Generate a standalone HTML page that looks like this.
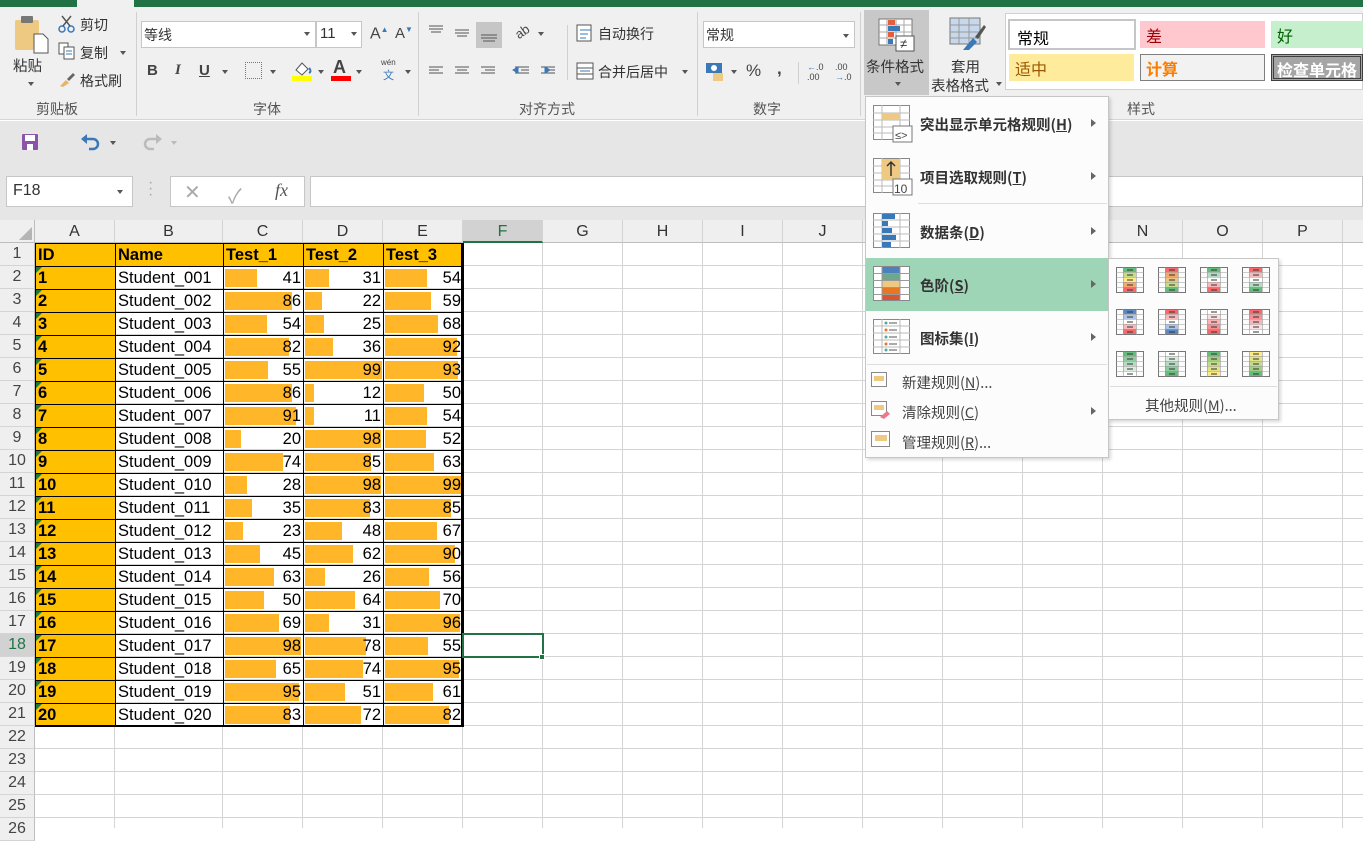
<!DOCTYPE html>
<html><head><meta charset="utf-8">
<style>
*{margin:0;padding:0;box-sizing:border-box}
body{width:1363px;height:828px;overflow:hidden;background:#fff;font-family:"Liberation Sans","Noto Sans CJK SC",sans-serif;position:relative;color:#262626}
.a{position:absolute}
.t{position:absolute;font-size:14px;color:#333;white-space:nowrap}
.cj{font-family:"Noto Sans CJK SC","Liberation Sans",sans-serif}
.glabel{position:absolute;top:99px;font-size:14px;color:#555}
.dd{position:absolute;width:0;height:0;border-left:3.5px solid transparent;border-right:3.5px solid transparent;border-top:4px solid #555}
.vs{position:absolute;width:1px;background:#d0d0d0}
table.d{position:absolute;left:35px;top:243px;border-collapse:collapse;table-layout:fixed;font-size:16.5px;color:#000}
table.d td{height:23px;border:1px solid #000;padding:0 2px;white-space:nowrap;overflow:hidden;position:relative;line-height:21px}
td.h{background:#ffc000;font-weight:bold}
td.n{text-align:right;padding-right:3px}
td.n i{position:absolute;left:1px;top:2px;bottom:2px;background:#ffb628}
td.n span{position:relative}
td.id{background:#ffc000;font-weight:bold}
td.id::before{content:"";position:absolute;left:0;top:0;border-top:6px solid #1e7a3c;border-right:6px solid transparent}
.rh{position:absolute;left:0;width:35px;height:23px;background:#efefef;border-bottom:1px solid #d4d4d4;border-right:1px solid #bdbdbd;text-align:center;font-size:16px;line-height:22px;color:#444}
.ch{position:absolute;top:220px;height:23px;background:#efefef;border-right:1px solid #d4d4d4;border-bottom:1px solid #bdbdbd;text-align:center;font-size:16px;line-height:23px;color:#333}
.mi{position:absolute;left:920px;font-size:14.5px;font-weight:bold;color:#333}
.ms{position:absolute;left:902px;font-size:14.5px;color:#444}
.arr{position:absolute;left:1091px;width:0;height:0;border-top:4px solid transparent;border-bottom:4px solid transparent;border-left:5px solid #666}
</style></head><body>
<!-- top green bar -->
<div class="a" style="left:0;top:0;width:1363px;height:7px;background:#217346"></div>
<div class="a" style="left:77px;top:0;width:57px;height:7px;background:#f0f0f0"></div>
<!-- ribbon -->
<div class="a" style="left:0;top:7px;width:1363px;height:113px;background:#f0f0f0;border-bottom:1px solid #d5d5d5"></div>
<!-- grey area below ribbon -->
<div class="a" style="left:0;top:121px;width:1363px;height:99px;background:#e6e6e6"></div>

<!-- clipboard group -->
<svg class="a" style="left:14px;top:14px" width="36" height="40"><rect x="1" y="6" width="24" height="30" rx="2" fill="#eec982"/><rect x="7" y="2" width="12" height="7" rx="1" fill="#777"/><path d="M20 20h9l5 5v14H20z" fill="#fff" stroke="#555"/></svg>
<div class="t cj" style="left:13px;top:55px;font-size:14.5px">粘贴</div>
<div class="dd" style="left:28px;top:82px"></div>
<svg class="a" style="left:58px;top:15px" width="18" height="18"><circle cx="4" cy="14" r="3" fill="none" stroke="#3a78b8" stroke-width="1.5"/><circle cx="13" cy="14" r="3" fill="none" stroke="#3a78b8" stroke-width="1.5"/><path d="M5 11L13 1M12 11L4 1" stroke="#555" stroke-width="1.5"/></svg>
<div class="t cj" style="left:80px;top:15px">剪切</div>
<svg class="a" style="left:58px;top:42px" width="18" height="18"><rect x="1" y="1" width="9" height="11" fill="#fff" stroke="#555"/><rect x="6" y="5" width="10" height="12" fill="#fff" stroke="#555"/><path d="M8 9h6M8 12h6" stroke="#3a78b8"/></svg>
<div class="t cj" style="left:80px;top:43px">复制</div>
<div class="dd" style="left:120px;top:51px"></div>
<svg class="a" style="left:58px;top:72px" width="18" height="16"><path d="M2 14l6-6 3 3-6 4z" fill="#e5b56a"/><path d="M9 7l6-6 2 2-6 6z" fill="#666"/></svg>
<div class="t cj" style="left:80px;top:71px">格式刷</div>
<div class="glabel cj" style="left:36px">剪贴板</div>
<div class="vs" style="left:136px;top:12px;height:104px"></div>

<!-- font group -->
<div class="a" style="left:141px;top:21px;width:175px;height:27px;background:#fff;border:1px solid #c6c6c6"></div>
<div class="t cj" style="left:144px;top:25px">等线</div>
<div class="dd" style="left:304px;top:32px"></div>
<div class="a" style="left:316px;top:21px;width:46px;height:27px;background:#fff;border:1px solid #c6c6c6"></div>
<div class="t" style="left:320px;top:25px;font-size:15px">11</div>
<div class="dd" style="left:351px;top:32px"></div>
<div class="t" style="left:370px;top:25px;font-size:16px;color:#444">A<sup style="font-size:8px;color:#3a78b8">▲</sup></div>
<div class="t" style="left:395px;top:25px;font-size:15px;color:#444">A<sup style="font-size:8px;color:#3a78b8">▼</sup></div>
<div class="t" style="left:147px;top:62px;font-weight:bold;font-size:15px;color:#444">B</div>
<div class="t" style="left:175px;top:62px;font-style:italic;font-weight:bold;font-size:15px;color:#444;font-family:'Liberation Serif',serif">I</div>
<div class="t" style="left:199px;top:62px;text-decoration:underline;font-weight:bold;font-size:15px;color:#444">U</div>
<div class="dd" style="left:222px;top:70px"></div>
<div class="a" style="left:245px;top:62px;width:17px;height:17px;border:1px dotted #777"></div>
<div class="dd" style="left:270px;top:70px"></div>
<svg class="a" style="left:291px;top:58px" width="22" height="24"><path d="M5 12l6-7 6 6-6 6z" fill="#fff" stroke="#555"/><path d="M18 10c2 2 2 4 0 5" stroke="#3a78b8" fill="none" stroke-width="2"/><rect x="1" y="18" width="20" height="5" fill="#ffff00"/></svg>
<div class="dd" style="left:318px;top:70px"></div>
<div class="t" style="left:333px;top:57px;font-size:18px;color:#444;font-weight:bold">A</div>
<div class="a" style="left:331px;top:76px;width:20px;height:5px;background:#f00"></div>
<div class="dd" style="left:356px;top:70px"></div>
<div class="t" style="left:381px;top:58px;font-size:8px;color:#444">wén</div>
<div class="t cj" style="left:383px;top:67px;font-size:11px;color:#3a78b8">文</div>
<div class="dd" style="left:405px;top:70px"></div>
<div class="glabel cj" style="left:253px">字体</div>
<div class="vs" style="left:418px;top:12px;height:104px"></div>

<!-- alignment -->
<svg class="a" style="left:427px;top:22px" width="140" height="60" stroke="#555" stroke-width="1">
<path d="M2 4h14M2 7h14M4 10h10"/><path d="M28 8h14M28 11h14M30 14h10"/>
<rect x="49" y="0" width="26" height="26" fill="#c6c6c6" stroke="none"/><path d="M54 13h16M54 16h16M56 19h12"/>
<path d="M2 45h14M2 48h10M2 51h14"/><path d="M28 45h14M30 48h10M28 51h14"/><path d="M54 45h14M58 48h10M54 51h14"/>
<path d="M88 45h14M94 48h8M88 51h14" /><path d="M114 45h14M120 48h8M114 51h14"/>
<path d="M86 48l5-3v6zM118 45l5 3-5 3z" fill="#3a78b8" stroke="#3a78b8"/>
</svg>
<div class="t" style="left:515px;top:24px;font-size:13px;color:#444;transform:rotate(-35deg)">ab</div>
<div class="dd" style="left:538px;top:32px"></div>
<div class="vs" style="left:567px;top:25px;height:55px"></div>
<svg class="a" style="left:576px;top:24px" width="18" height="18"><rect x="1" y="1" width="14" height="16" fill="#fff" stroke="#555"/><path d="M4 6h11M4 10h8M4 14h6" stroke="#3a78b8"/></svg>
<div class="t cj" style="left:598px;top:24px">自动换行</div>
<svg class="a" style="left:576px;top:62px" width="18" height="18"><rect x="1" y="1" width="16" height="16" fill="#fff" stroke="#555"/><path d="M1 6h16M1 12h16" stroke="#555"/><path d="M4 9h10" stroke="#3a78b8"/></svg>
<div class="t cj" style="left:598px;top:62px">合并后居中</div>
<div class="dd" style="left:682px;top:70px"></div>
<div class="glabel cj" style="left:519px">对齐方式</div>
<div class="vs" style="left:697px;top:12px;height:104px"></div>

<!-- number -->
<div class="a" style="left:703px;top:21px;width:152px;height:27px;background:#fff;border:1px solid #c6c6c6"></div>
<div class="t cj" style="left:706px;top:25px">常规</div>
<div class="dd" style="left:843px;top:34px"></div>
<svg class="a" style="left:705px;top:62px" width="22" height="20"><rect x="1" y="1" width="16" height="10" fill="#3a78b8"/><circle cx="9" cy="6" r="3" fill="#fff"/><rect x="8" y="11" width="10" height="8" fill="#eec982"/></svg>
<div class="dd" style="left:731px;top:70px"></div>
<div class="t" style="left:746px;top:61px;font-size:17px;color:#444">%</div>
<div class="t" style="left:777px;top:59px;font-size:17px;color:#444;font-weight:bold">,</div>
<div class="vs" style="left:798px;top:62px;height:22px"></div>
<div class="t" style="left:807px;top:62px;font-size:9px;line-height:10px;color:#444"><span style="color:#3a78b8">←</span>.0<br>.00</div>
<div class="t" style="left:835px;top:62px;font-size:9px;line-height:10px;color:#444">.00<br><span style="color:#3a78b8">→</span>.0</div>
<div class="glabel cj" style="left:753px">数字</div>
<div class="vs" style="left:860px;top:12px;height:104px"></div>

<!-- styles -->
<div class="a" style="left:864px;top:10px;width:65px;height:85px;background:#c8c8c8"></div>
<svg class="a" style="left:878px;top:18px" width="38" height="34"><g stroke="#777" fill="#fff"><rect x="1" y="1" width="33" height="26"/></g><path d="M1 7h33M1 14h33M1 20h33M9 1v26M18 1v26M26 1v26" stroke="#aaa"/><rect x="10" y="2" width="7" height="5" fill="#e06040"/><rect x="10" y="8" width="12" height="5" fill="#3a78b8"/><rect x="10" y="14" width="6" height="5" fill="#e06040"/><rect x="10" y="21" width="5" height="5" fill="#3a78b8"/><rect x="18" y="18" width="18" height="15" fill="#fff" stroke="#555"/><text x="22" y="30" font-size="13" fill="#333">≠</text></svg>
<div class="t cj" style="left:866px;top:56px;font-size:14.5px">条件格式</div>
<div class="dd" style="left:895px;top:82px"></div>
<svg class="a" style="left:949px;top:17px" width="38" height="36"><rect x="1" y="1" width="30" height="26" fill="#c8d8ec" stroke="#777"/><path d="M1 8h30M1 15h30M1 21h30M10 1v26M20 1v26" stroke="#999"/><path d="M14 33l10-12 4 4-8 8z" fill="#3a78b8"/><path d="M26 20l9-12 2 2-8 12z" fill="#555"/></svg>
<div class="t cj" style="left:951px;top:56px;font-size:14.5px">套用</div>
<div class="t cj" style="left:931px;top:75px;font-size:14.5px">表格格式</div>
<div class="dd" style="left:996px;top:82px"></div>
<div class="a" style="left:1005px;top:13px;width:358px;height:77px;background:#fff;border:1px solid #d0d0d0"></div>
<div class="a cj" style="left:1008px;top:19px;width:128px;height:31px;border:2px solid #c6c6c6;background:#fff;font-size:16px;padding:4px 7px;color:#000">常规</div>
<div class="a cj" style="left:1140px;top:21px;width:125px;height:27px;background:#ffc7ce;font-size:16px;padding:2px 6px;color:#9c0006">差</div>
<div class="a cj" style="left:1271px;top:21px;width:92px;height:27px;background:#c6efce;font-size:16px;padding:2px 6px;color:#006100">好</div>
<div class="a cj" style="left:1009px;top:54px;width:125px;height:27px;background:#ffeb9c;font-size:16px;padding:2px 6px;color:#9c5700">适中</div>
<div class="a cj" style="left:1140px;top:54px;width:125px;height:27px;background:#f2f2f2;border:1px solid #7f7f7f;font-size:16px;padding:1px 5px;color:#fa7d00;font-weight:bold">计算</div>
<div class="a cj" style="left:1271px;top:54px;width:92px;height:27px;background:#a5a5a5;border:3px double #3f3f3f;font-size:16px;padding:0 3px;color:#fff;font-weight:bold;overflow:hidden;white-space:nowrap">检查单元格</div>
<div class="glabel cj" style="left:1127px">样式</div>

<!-- QAT -->
<svg class="a" style="left:22px;top:134px" width="16" height="16"><rect x="0" y="0" width="16" height="16" rx="1" fill="#8a55a8"/><rect x="3" y="1" width="10" height="6" fill="#fff"/><rect x="5" y="10" width="6" height="6" fill="#fff"/></svg>
<svg class="a" style="left:80px;top:133px" width="22" height="18"><path d="M5 6h8a5 5 0 010 10h-4" stroke="#3a78b8" stroke-width="2.5" fill="none"/><path d="M1 6l6-5v10z" fill="#3a78b8"/></svg>
<div class="dd" style="left:110px;top:141px"></div>
<svg class="a" style="left:141px;top:133px" width="22" height="18"><path d="M17 6H9a5 5 0 000 10h4" stroke="#bbb" stroke-width="2.5" fill="none"/><path d="M21 6l-6-5v10z" fill="#bbb"/></svg>
<div class="dd" style="left:171px;top:141px;border-top-color:#bbb"></div>

<!-- formula bar -->
<div class="a" style="left:6px;top:176px;width:127px;height:31px;background:#fff;border:1px solid #c6c6c6"></div>
<div class="t" style="left:13px;top:182px;font-size:16px;color:#333">F18</div>
<div class="dd" style="left:117px;top:190px"></div>
<div class="t" style="left:148px;top:180px;color:#aaa;font-size:16px;line-height:6px">·<br>·<br>·</div>
<div class="a" style="left:170px;top:176px;width:135px;height:31px;background:#fff;border:1px solid #c6c6c6"></div>
<div class="t" style="left:184px;top:180px;font-size:20px;color:#aaa">✕</div>
<div class="t" style="left:228px;top:180px;font-size:20px;color:#aaa">✓</div>
<div class="t" style="left:275px;top:180px;font-size:18px;color:#555;font-style:italic;font-family:'Liberation Serif',serif">fx</div>
<div class="a" style="left:310px;top:176px;width:1053px;height:31px;background:#fff;border:1px solid #c6c6c6"></div>

<!-- grid lines -->
<div class="a" style="left:35px;top:243px;width:1328px;height:585px;background:repeating-linear-gradient(to bottom,transparent 0 22px,#d4d4d4 22px 23px)"></div>
<div class="vs" style="left:542px;top:243px;height:585px;background:#d4d4d4"></div>
<div class="vs" style="left:622px;top:243px;height:585px;background:#d4d4d4"></div>
<div class="vs" style="left:702px;top:243px;height:585px;background:#d4d4d4"></div>
<div class="vs" style="left:782px;top:243px;height:585px;background:#d4d4d4"></div>
<div class="vs" style="left:862px;top:243px;height:585px;background:#d4d4d4"></div>
<div class="vs" style="left:942px;top:243px;height:585px;background:#d4d4d4"></div>
<div class="vs" style="left:1022px;top:243px;height:585px;background:#d4d4d4"></div>
<div class="vs" style="left:1102px;top:243px;height:585px;background:#d4d4d4"></div>
<div class="vs" style="left:1182px;top:243px;height:585px;background:#d4d4d4"></div>
<div class="vs" style="left:1262px;top:243px;height:585px;background:#d4d4d4"></div>
<div class="vs" style="left:1342px;top:243px;height:585px;background:#d4d4d4"></div>
<div class="vs" style="left:114px;top:726px;height:102px;background:#d4d4d4"></div>
<div class="vs" style="left:222px;top:726px;height:102px;background:#d4d4d4"></div>
<div class="vs" style="left:302px;top:726px;height:102px;background:#d4d4d4"></div>
<div class="vs" style="left:382px;top:726px;height:102px;background:#d4d4d4"></div>
<div class="vs" style="left:462px;top:726px;height:102px;background:#d4d4d4"></div>

<!-- column headers -->
<div class="a" style="left:0;top:220px;width:35px;height:23px;background:#efefef;border-right:1px solid #bdbdbd;border-bottom:1px solid #bdbdbd"></div>
<div class="a" style="left:19px;top:227px;width:0;height:0;border-left:13px solid transparent;border-bottom:13px solid #b5b5b5"></div>
<div class="ch" style="left:35px;width:80px">A</div>
<div class="ch" style="left:115px;width:108px">B</div>
<div class="ch" style="left:223px;width:80px">C</div>
<div class="ch" style="left:303px;width:80px">D</div>
<div class="ch" style="left:383px;width:80px">E</div>
<div class="ch" style="left:463px;width:80px;background:#d2d2d2;color:#217346;border-bottom:2px solid #217346">F</div>
<div class="ch" style="left:543px;width:80px">G</div>
<div class="ch" style="left:623px;width:80px">H</div>
<div class="ch" style="left:703px;width:80px">I</div>
<div class="ch" style="left:783px;width:80px">J</div>
<div class="ch" style="left:863px;width:80px">K</div>
<div class="ch" style="left:943px;width:80px">L</div>
<div class="ch" style="left:1023px;width:80px">M</div>
<div class="ch" style="left:1103px;width:80px">N</div>
<div class="ch" style="left:1183px;width:80px">O</div>
<div class="ch" style="left:1263px;width:80px">P</div>
<div class="ch" style="left:1343px;width:30px"></div>

<!-- row headers -->
<div class="rh" style="top:243px">1</div><div class="rh" style="top:266px">2</div><div class="rh" style="top:289px">3</div><div class="rh" style="top:312px">4</div><div class="rh" style="top:335px">5</div><div class="rh" style="top:358px">6</div><div class="rh" style="top:381px">7</div><div class="rh" style="top:404px">8</div><div class="rh" style="top:427px">9</div><div class="rh" style="top:450px">10</div><div class="rh" style="top:473px">11</div><div class="rh" style="top:496px">12</div><div class="rh" style="top:519px">13</div><div class="rh" style="top:542px">14</div><div class="rh" style="top:565px">15</div><div class="rh" style="top:588px">16</div><div class="rh" style="top:611px">17</div><div class="rh" style="top:634px;background:#d2d2d2;color:#217346">18</div><div class="rh" style="top:657px">19</div><div class="rh" style="top:680px">20</div><div class="rh" style="top:703px">21</div><div class="rh" style="top:726px">22</div><div class="rh" style="top:749px">23</div><div class="rh" style="top:772px">24</div><div class="rh" style="top:795px">25</div><div class="rh" style="top:818px">26</div>

<!-- data -->
<table class="d">
<colgroup><col style="width:80px"><col style="width:108px"><col style="width:80px"><col style="width:80px"><col style="width:80px"></colgroup>
<tr><td class="h">ID</td><td class="h">Name</td><td class="h">Test_1</td><td class="h">Test_2</td><td class="h">Test_3</td></tr>
<tr><td class="id">1</td><td>Student_001</td><td class="n"><i style="width:32px"></i><span>41</span></td><td class="n"><i style="width:24px"></i><span>31</span></td><td class="n"><i style="width:42px"></i><span>54</span></td></tr>
<tr><td class="id">2</td><td>Student_002</td><td class="n"><i style="width:67px"></i><span>86</span></td><td class="n"><i style="width:17px"></i><span>22</span></td><td class="n"><i style="width:46px"></i><span>59</span></td></tr>
<tr><td class="id">3</td><td>Student_003</td><td class="n"><i style="width:42px"></i><span>54</span></td><td class="n"><i style="width:19px"></i><span>25</span></td><td class="n"><i style="width:53px"></i><span>68</span></td></tr>
<tr><td class="id">4</td><td>Student_004</td><td class="n"><i style="width:64px"></i><span>82</span></td><td class="n"><i style="width:28px"></i><span>36</span></td><td class="n"><i style="width:72px"></i><span>92</span></td></tr>
<tr><td class="id">5</td><td>Student_005</td><td class="n"><i style="width:43px"></i><span>55</span></td><td class="n"><i style="width:77px"></i><span>99</span></td><td class="n"><i style="width:73px"></i><span>93</span></td></tr>
<tr><td class="id">6</td><td>Student_006</td><td class="n"><i style="width:67px"></i><span>86</span></td><td class="n"><i style="width:9px"></i><span>12</span></td><td class="n"><i style="width:39px"></i><span>50</span></td></tr>
<tr><td class="id">7</td><td>Student_007</td><td class="n"><i style="width:71px"></i><span>91</span></td><td class="n"><i style="width:9px"></i><span>11</span></td><td class="n"><i style="width:42px"></i><span>54</span></td></tr>
<tr><td class="id">8</td><td>Student_008</td><td class="n"><i style="width:16px"></i><span>20</span></td><td class="n"><i style="width:76px"></i><span>98</span></td><td class="n"><i style="width:41px"></i><span>52</span></td></tr>
<tr><td class="id">9</td><td>Student_009</td><td class="n"><i style="width:58px"></i><span>74</span></td><td class="n"><i style="width:66px"></i><span>85</span></td><td class="n"><i style="width:49px"></i><span>63</span></td></tr>
<tr><td class="id">10</td><td>Student_010</td><td class="n"><i style="width:22px"></i><span>28</span></td><td class="n"><i style="width:76px"></i><span>98</span></td><td class="n"><i style="width:77px"></i><span>99</span></td></tr>
<tr><td class="id">11</td><td>Student_011</td><td class="n"><i style="width:27px"></i><span>35</span></td><td class="n"><i style="width:65px"></i><span>83</span></td><td class="n"><i style="width:66px"></i><span>85</span></td></tr>
<tr><td class="id">12</td><td>Student_012</td><td class="n"><i style="width:18px"></i><span>23</span></td><td class="n"><i style="width:37px"></i><span>48</span></td><td class="n"><i style="width:52px"></i><span>67</span></td></tr>
<tr><td class="id">13</td><td>Student_013</td><td class="n"><i style="width:35px"></i><span>45</span></td><td class="n"><i style="width:48px"></i><span>62</span></td><td class="n"><i style="width:70px"></i><span>90</span></td></tr>
<tr><td class="id">14</td><td>Student_014</td><td class="n"><i style="width:49px"></i><span>63</span></td><td class="n"><i style="width:20px"></i><span>26</span></td><td class="n"><i style="width:44px"></i><span>56</span></td></tr>
<tr><td class="id">15</td><td>Student_015</td><td class="n"><i style="width:39px"></i><span>50</span></td><td class="n"><i style="width:50px"></i><span>64</span></td><td class="n"><i style="width:55px"></i><span>70</span></td></tr>
<tr><td class="id">16</td><td>Student_016</td><td class="n"><i style="width:54px"></i><span>69</span></td><td class="n"><i style="width:24px"></i><span>31</span></td><td class="n"><i style="width:75px"></i><span>96</span></td></tr>
<tr><td class="id">17</td><td>Student_017</td><td class="n"><i style="width:76px"></i><span>98</span></td><td class="n"><i style="width:61px"></i><span>78</span></td><td class="n"><i style="width:43px"></i><span>55</span></td></tr>
<tr><td class="id">18</td><td>Student_018</td><td class="n"><i style="width:51px"></i><span>65</span></td><td class="n"><i style="width:58px"></i><span>74</span></td><td class="n"><i style="width:74px"></i><span>95</span></td></tr>
<tr><td class="id">19</td><td>Student_019</td><td class="n"><i style="width:74px"></i><span>95</span></td><td class="n"><i style="width:40px"></i><span>51</span></td><td class="n"><i style="width:48px"></i><span>61</span></td></tr>
<tr><td class="id">20</td><td>Student_020</td><td class="n"><i style="width:65px"></i><span>83</span></td><td class="n"><i style="width:56px"></i><span>72</span></td><td class="n"><i style="width:64px"></i><span>82</span></td></tr>
</table>
<div class="a" style="left:461px;top:243px;width:2px;height:484px;background:#000"></div>
<div class="a" style="left:35px;top:725px;width:428px;height:2px;background:#000"></div>
<!-- selection -->
<div class="a" style="left:462px;top:633px;width:82px;height:25px;border:2px solid #217346"></div>
<div class="a" style="left:539px;top:654px;width:6px;height:6px;background:#217346;border:1px solid #fff"></div>

<!-- dropdown menu -->
<div class="a" style="left:865px;top:96px;width:244px;height:362px;background:#fcfcfc;border:1px solid #c6c6c6;box-shadow:2px 2px 3px rgba(0,0,0,.15)"></div>
<svg class="a" style="left:873px;top:105px" width="40" height="38"><rect x="0.5" y="0.5" width="36" height="34" fill="#fff" stroke="#888"/><path d="M0 8h37M0 15h37M0 22h37M0 28h37M9 0v35M27 0v35" stroke="#bbb"/><rect x="9" y="8" width="18" height="7" fill="#eec982"/><rect x="20" y="21" width="19" height="16" fill="#fff" stroke="#777"/><text x="22" y="34" font-size="11" fill="#444">≤&gt;</text></svg>
<div class="mi cj" style="top:114px">突出显示单元格规则(<u>H</u>)</div><div class="arr" style="top:119px"></div>
<svg class="a" style="left:873px;top:158px" width="40" height="38"><rect x="0.5" y="0.5" width="36" height="34" fill="#fff" stroke="#888"/><path d="M0 8h37M0 15h37M0 22h37M0 28h37M9 0v35M27 0v35" stroke="#bbb"/><rect x="9" y="1" width="18" height="21" fill="#eec982"/><path d="M18 4v14M14 8l4-4 4 4" stroke="#333" stroke-width="1.5" fill="none"/><rect x="20" y="21" width="19" height="16" fill="#fff" stroke="#777"/><text x="21" y="35" font-size="12" fill="#444">10</text></svg>
<div class="mi cj" style="top:167px">项目选取规则(<u>T</u>)</div><div class="arr" style="top:172px"></div>
<div class="a" style="left:918px;top:203px;width:189px;height:1px;background:#ddd"></div>
<svg class="a" style="left:873px;top:213px" width="40" height="38"><rect x="0.5" y="0.5" width="36" height="34" fill="#fff" stroke="#888"/><path d="M0 7h37M0 14h37M0 21h37M0 28h37M9 0v35M27 0v35" stroke="#bbb"/><g fill="#3a78b8"><rect x="9" y="1" width="13" height="5"/><rect x="9" y="8" width="6" height="5"/><rect x="9" y="15" width="10" height="5"/><rect x="9" y="22" width="14" height="5"/><rect x="9" y="29" width="9" height="5"/></g></svg>
<div class="mi cj" style="top:222px">数据条(<u>D</u>)</div><div class="arr" style="top:227px"></div>
<div class="a" style="left:866px;top:258px;width:242px;height:53px;background:#9fd5b7"></div>
<svg class="a" style="left:873px;top:266px" width="40" height="38"><rect x="0.5" y="0.5" width="36" height="34" fill="#fff" stroke="#888"/><g><rect x="9" y="1" width="18" height="6" fill="#4e7fbf"/><rect x="9" y="8" width="18" height="6" fill="#6da88a"/><rect x="9" y="15" width="18" height="6" fill="#eec982"/><rect x="9" y="22" width="18" height="6" fill="#e87722"/><rect x="9" y="29" width="18" height="5" fill="#d65532"/></g><path d="M0 7.5h37M0 14.5h37M0 21.5h37M0 28.5h37M9 0v35M27 0v35" stroke="#999"/></svg>
<div class="mi cj" style="top:275px">色阶(<u>S</u>)</div><div class="arr" style="top:280px"></div>
<svg class="a" style="left:873px;top:319px" width="40" height="38"><rect x="0.5" y="0.5" width="36" height="34" fill="#fff" stroke="#888"/><path d="M0 7h37M0 14h37M0 21h37M0 28h37M9 0v35M27 0v35" stroke="#bbb"/><g><circle cx="13" cy="4" r="1.5" fill="#5a9"/><circle cx="13" cy="11" r="1.5" fill="#e87722"/><circle cx="13" cy="18" r="1.5" fill="#5a9"/><circle cx="13" cy="25" r="1.5" fill="#e87722"/><circle cx="13" cy="31" r="1.5" fill="#5a9"/></g><path d="M16 4h8M16 11h8M16 18h8M16 25h8M16 31h8" stroke="#555"/></svg>
<div class="mi cj" style="top:328px">图标集(<u>I</u>)</div><div class="arr" style="top:333px"></div>
<div class="a" style="left:867px;top:364px;width:240px;height:1px;background:#ddd"></div>
<svg class="a" style="left:871px;top:372px" width="18" height="16"><rect x="0.5" y="0.5" width="15" height="14" fill="#fff" stroke="#888"/><rect x="3" y="4" width="10" height="5" fill="#eec982"/></svg>
<div class="ms cj" style="top:372px">新建规则(<u>N</u>)...</div>
<svg class="a" style="left:871px;top:401px" width="20" height="18"><rect x="0.5" y="0.5" width="15" height="14" fill="#fff" stroke="#888"/><rect x="3" y="4" width="10" height="5" fill="#eec982"/><path d="M9 16l7-6 3 3-6 5z" fill="#e87a8a"/></svg>
<div class="ms cj" style="top:402px">清除规则(<u>C</u>)</div><div class="arr" style="top:407px"></div>
<svg class="a" style="left:871px;top:431px" width="20" height="18"><rect x="0.5" y="0.5" width="18" height="15" fill="#fff" stroke="#888"/><rect x="4" y="4" width="12" height="6" fill="#eec982"/></svg>
<div class="ms cj" style="top:432px">管理规则(<u>R</u>)...</div>

<!-- submenu -->
<div class="a" style="left:1108px;top:258px;width:171px;height:162px;background:#fcfcfc;border:1px solid #c6c6c6;box-shadow:2px 2px 3px rgba(0,0,0,.15)"></div>
<svg class="a" style="left:1116px;top:267px" width="160" height="115">
<defs><g id="fr"><rect x="0.5" y="0.5" width="27" height="25" fill="none" stroke="#777"/><path d="M0 5.5h28M0 10.5h28M0 15.5h28M0 20.5h28M7.5 0v26M20.5 0v26" stroke="#999" stroke-width=".6"/><path d="M11 3h6M11 8h6M11 13h6M11 18h6M11 23h6" stroke="#333"/></g></defs>
<g transform="translate(0,0)"><rect x="7" y="0" width="13" height="5" fill="#63be7b"/><rect x="7" y="5" width="13" height="5" fill="#c5dc8a"/><rect x="7" y="10" width="13" height="5" fill="#ffeb84"/><rect x="7" y="15" width="13" height="5" fill="#f8a66e"/><rect x="7" y="20" width="13" height="6" fill="#f8696b"/><use href="#fr"/></g>
<g transform="translate(42,0)"><rect x="7" y="0" width="13" height="5" fill="#f8696b"/><rect x="7" y="5" width="13" height="5" fill="#f8a66e"/><rect x="7" y="10" width="13" height="5" fill="#e8c77c"/><rect x="7" y="15" width="13" height="5" fill="#c5dc8a"/><rect x="7" y="20" width="13" height="6" fill="#63be7b"/><use href="#fr"/></g>
<g transform="translate(84,0)"><rect x="7" y="0" width="13" height="5" fill="#63be7b"/><rect x="7" y="5" width="13" height="5" fill="#b1ddc0"/><rect x="7" y="10" width="13" height="5" fill="#fff"/><rect x="7" y="15" width="13" height="5" fill="#f9b9bb"/><rect x="7" y="20" width="13" height="6" fill="#f8696b"/><use href="#fr"/></g>
<g transform="translate(126,0)"><rect x="7" y="0" width="13" height="5" fill="#f8696b"/><rect x="7" y="5" width="13" height="5" fill="#f9b9bb"/><rect x="7" y="10" width="13" height="5" fill="#fff"/><rect x="7" y="15" width="13" height="5" fill="#b1ddc0"/><rect x="7" y="20" width="13" height="6" fill="#63be7b"/><use href="#fr"/></g>
<g transform="translate(0,42)"><rect x="7" y="0" width="13" height="5" fill="#5a8ac6"/><rect x="7" y="5" width="13" height="5" fill="#aec5e7"/><rect x="7" y="10" width="13" height="5" fill="#fff"/><rect x="7" y="15" width="13" height="5" fill="#f9b9bb"/><rect x="7" y="20" width="13" height="6" fill="#f8696b"/><use href="#fr"/></g>
<g transform="translate(42,42)"><rect x="7" y="0" width="13" height="5" fill="#f8696b"/><rect x="7" y="5" width="13" height="5" fill="#f9b9bb"/><rect x="7" y="10" width="13" height="5" fill="#fff"/><rect x="7" y="15" width="13" height="5" fill="#aec5e7"/><rect x="7" y="20" width="13" height="6" fill="#5a8ac6"/><use href="#fr"/></g>
<g transform="translate(84,42)"><rect x="7" y="0" width="13" height="5" fill="#fff"/><rect x="7" y="5" width="13" height="5" fill="#fcdfe0"/><rect x="7" y="10" width="13" height="5" fill="#fbb4b6"/><rect x="7" y="15" width="13" height="5" fill="#f98f92"/><rect x="7" y="20" width="13" height="6" fill="#f8696b"/><use href="#fr"/></g>
<g transform="translate(126,42)"><rect x="7" y="0" width="13" height="5" fill="#f8696b"/><rect x="7" y="5" width="13" height="5" fill="#f98f92"/><rect x="7" y="10" width="13" height="5" fill="#fbb4b6"/><rect x="7" y="15" width="13" height="5" fill="#fcdfe0"/><rect x="7" y="20" width="13" height="6" fill="#fff"/><use href="#fr"/></g>
<g transform="translate(0,84)"><rect x="7" y="0" width="13" height="5" fill="#63be7b"/><rect x="7" y="5" width="13" height="5" fill="#8ccc9e"/><rect x="7" y="10" width="13" height="5" fill="#b4dcc1"/><rect x="7" y="15" width="13" height="5" fill="#d9ecde"/><rect x="7" y="20" width="13" height="6" fill="#fff"/><use href="#fr"/></g>
<g transform="translate(42,84)"><rect x="7" y="0" width="13" height="5" fill="#fff"/><rect x="7" y="5" width="13" height="5" fill="#d9ecde"/><rect x="7" y="10" width="13" height="5" fill="#b4dcc1"/><rect x="7" y="15" width="13" height="5" fill="#8ccc9e"/><rect x="7" y="20" width="13" height="6" fill="#63be7b"/><use href="#fr"/></g>
<g transform="translate(84,84)"><rect x="7" y="0" width="13" height="5" fill="#63be7b"/><rect x="7" y="5" width="13" height="5" fill="#a3d07f"/><rect x="7" y="10" width="13" height="5" fill="#c5dc8a"/><rect x="7" y="15" width="13" height="5" fill="#e2e386"/><rect x="7" y="20" width="13" height="6" fill="#ffeb84"/><use href="#fr"/></g>
<g transform="translate(126,84)"><rect x="7" y="0" width="13" height="5" fill="#ffeb84"/><rect x="7" y="5" width="13" height="5" fill="#e2e386"/><rect x="7" y="10" width="13" height="5" fill="#c5dc8a"/><rect x="7" y="15" width="13" height="5" fill="#a3d07f"/><rect x="7" y="20" width="13" height="6" fill="#63be7b"/><use href="#fr"/></g>
</svg>
<div class="a" style="left:1110px;top:386px;width:167px;height:1px;background:#ddd"></div>
<div class="ms cj" style="left:1145px;top:395px">其他规则(<u>M</u>)...</div>
</body></html>
